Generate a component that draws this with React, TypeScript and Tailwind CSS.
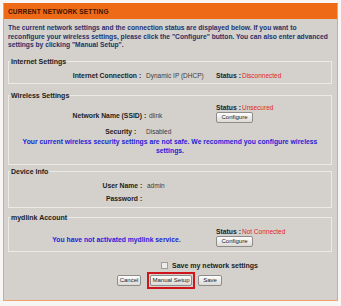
import React from 'react';

const font = { fontFamily: '"Liberation Sans", Arial, sans-serif' };

// label column is right-aligned so the colon lands where the reference puts it
function Row({ labelW, valueGap = 9, label, value }: { labelW: number; valueGap?: number; label: string; value?: string }) {
  return (
    <div className="flex h-[8px] items-center whitespace-nowrap leading-[8px]">
      <span className="text-right font-bold text-[#222]" style={{ width: labelW }}>
        {label}
      </span>
      <span className="pl-[2px] font-bold text-[#222]" style={{ width: valueGap }}>
        :
      </span>
      <span className="text-[6.5px] text-[#3c3c3c]">{value}</span>
    </div>
  );
}

function Status({ text }: { text: string }) {
  return (
    <div className="flex h-[8px] items-center whitespace-nowrap leading-[8px]">
      <span className="font-bold text-[#222]">Status :</span>
      <span className="ml-[1px] text-[6.5px] text-[#e2232a]">{text}</span>
    </div>
  );
}

function Btn({ children, className = '' }: { children: React.ReactNode; className?: string }) {
  return (
    <button
      className={`block h-[11px] rounded-[2px] border border-[#8e8c88] bg-gradient-to-b from-[#fdfdfd] to-[#dcdad6] text-center text-[6px] leading-none text-[#222] ${className}`}
    >
      {children}
    </button>
  );
}

function Section({ title, className, children }: { title: string; className: string; children: React.ReactNode }) {
  return (
    <fieldset className={`ml-[4px] mr-[5px] border border-[#eceae6] ${className}`}>
      <legend className="ml-[1px] px-[1px] text-[7px] font-bold leading-[8px] text-[#222]">{title}</legend>
      {children}
    </fieldset>
  );
}

export default function App() {
  return (
    <div className="h-[306px] w-[341px] bg-[#f7f6f4] px-[3px] pt-[3px]" style={font}>
      <div className="w-[335px] border border-[#f2a16a] border-t-[#ef6a17]">
        <div className="flex h-[15px] items-center bg-[#ef6a17] px-[4px] text-[6.5px] font-bold tracking-[0.15px] text-[#3d1500]">
          CURRENT NETWORK SETTING
        </div>
        <div className="h-[281px] bg-[#d4d1cc] pt-[5px] text-[6.8px]">
          <p className="whitespace-nowrap px-[4px] text-[6.7px] font-bold leading-[8.5px] text-[#26306a]">
            The current network settings and the connection status are displayed below. If you want to
            <br />
            reconfigure your wireless settings, please click the "Configure" button. You can also enter advanced
            <br />
            settings by clicking "Manual Setup".
          </p>

          <Section title="Internet Settings" className="mt-[8px] h-[26px]">
            <div className="flex pt-[6px]">
              <div className="w-[207px]">
                <Row labelW={128} label="Internet Connection" value="Dynamic IP (DHCP)" />
              </div>
              <Status text="Disconnected" />
            </div>
          </Section>

          <Section title="Wireless Settings" className="mt-[8px] h-[73px]">
            <div className="flex pt-[4px]">
              <div className="w-[207px] pt-[8px]">
                <Row labelW={133} valueGap={7} label="Network Name (SSID)" value="dlink" />
              </div>
              <div>
                <Status text="Unsecured" />
                <Btn className="w-[37px]">Configure</Btn>
              </div>
            </div>
            <div className="mt-[5px]">
              <Row labelW={123} valueGap={14} label="Security" value="Disabled" />
            </div>
            <p className="mt-[1px] whitespace-nowrap text-center text-[6.8px] font-bold leading-[9.5px] text-[#2222d8]">
              Your current wireless security settings are not safe. We recommend you configure wireless
              <br />
              settings.
            </p>
          </Section>

          <Section title="Device Info" className="mt-[3px] h-[40px]">
            <div className="flex flex-col gap-[5px] pt-[6px]">
              <Row labelW={129} label="User Name" value="admin" />
              <Row labelW={129} label="Password" />
            </div>
          </Section>

          <Section title="mydlink Account" className="mt-[6px] h-[38px]">
            <div className="flex pt-[6px]">
              <div className="w-[207px] whitespace-nowrap pl-[8px] pt-[8px] text-center font-bold leading-[8px] text-[#2222d8]">
                You have not activated mydlink service.
              </div>
              <div>
                <Status text="Not Connected" />
                <Btn className="w-[37px]">Configure</Btn>
              </div>
            </div>
          </Section>

          <div className="mt-[10px] flex h-[8px] items-center pl-[157px]">
            <span className="mr-[4px] h-[7px] w-[7px] border border-[#a09e9a] bg-[#eeedea]" />
            <span className="text-[7px] font-bold leading-[8px] text-[#222]">Save my network settings</span>
          </div>
          <div className="mt-[2px] flex items-center pl-[113px]">
            <Btn className="w-[24px]">Cancel</Btn>
            <div className="ml-[6px] border-2 border-[#d0141b] p-[1px]">
              <Btn className="w-[42px]">Manual Setup</Btn>
            </div>
            <Btn className="ml-[3px] w-[24px]">Save</Btn>
          </div>
        </div>
      </div>
    </div>
  );
}
